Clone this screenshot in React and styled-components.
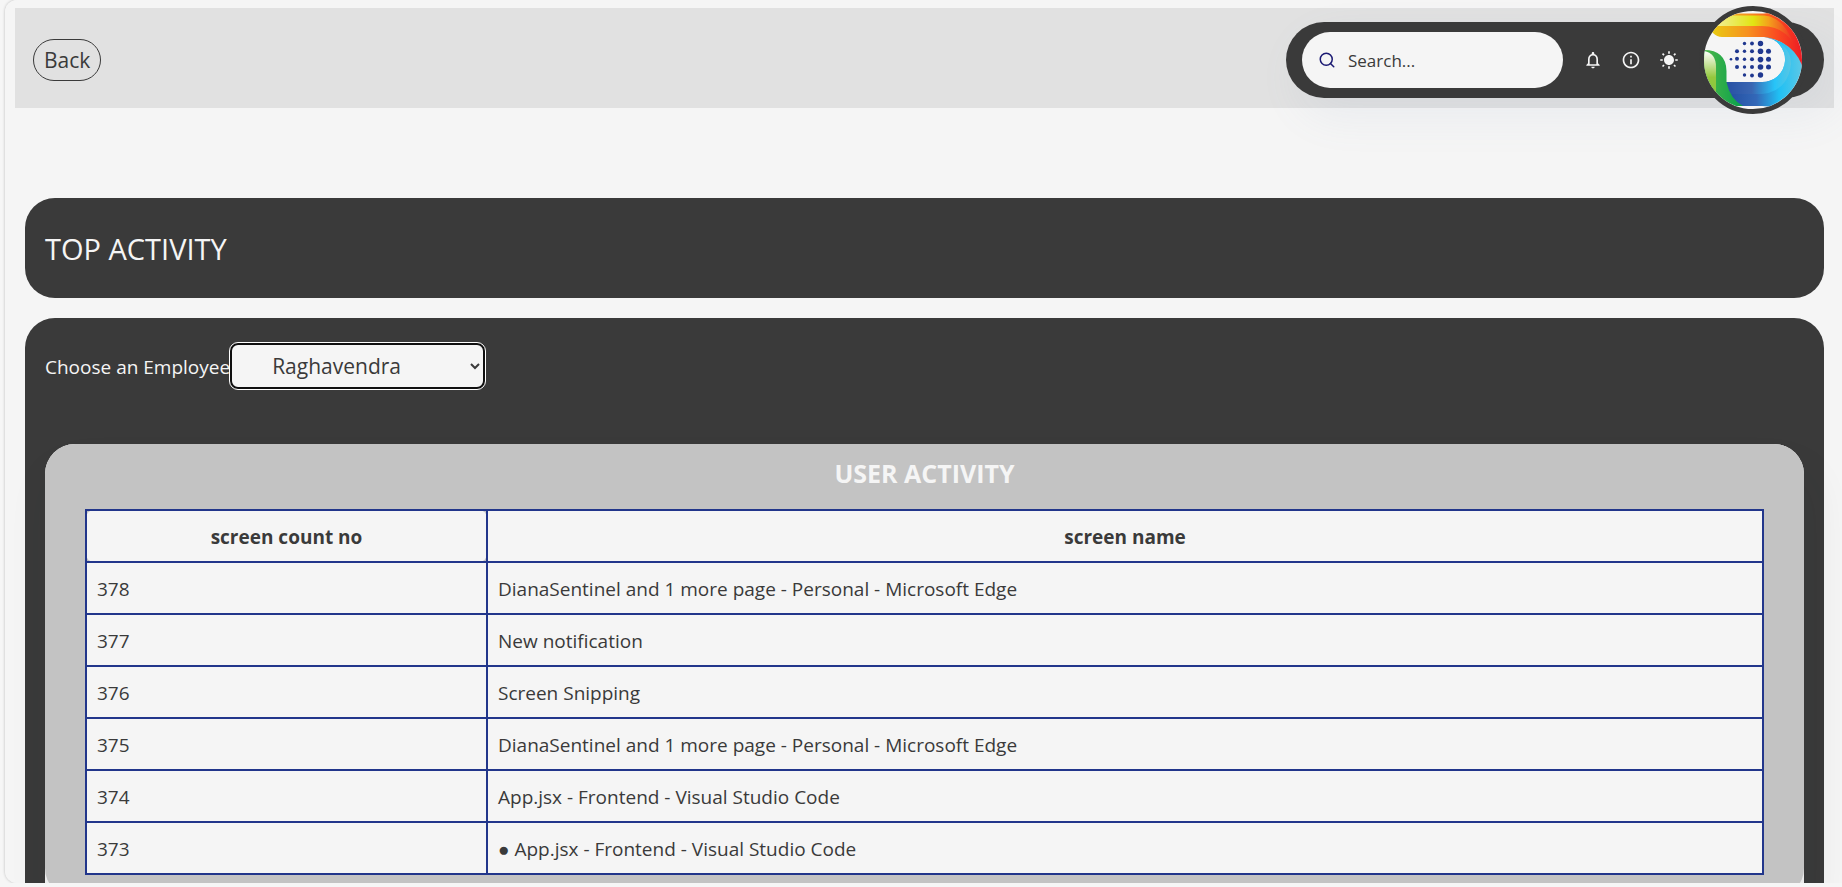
import React, { useState } from "react";
import styled, { createGlobalStyle } from "styled-components";
import { MdNotificationsNone, MdInfoOutline } from "react-icons/md";
import { IoMdSunny } from "react-icons/io";
import { FiSearch } from "react-icons/fi";

const color = {
  light: "#f5f5f5",
  dark: "#3a3a3a",
  bar: "#e1e1e1",
  card: "#c3c3c3",
  line: "#22368b",
};

const GlobalStyle = createGlobalStyle`
  *, *::before, *::after { box-sizing: border-box; }
  body {
    margin: 0;
    background: #f6f6f6;
    color: ${color.dark};
    font-family: "Segoe UI", "Open Sans", "Noto Sans", sans-serif;
    overflow: hidden;
  }
  button, input, select { font-family: inherit; }
`;

const Frame = styled.div`
  height: calc(100vh - 4px);
  margin-left: 5px;
  padding: 8px 8px 0 10px;
  background: ${color.light};
  border-radius: 12px 0 0 12px;
  box-shadow: 0 0 3px rgba(0, 0, 0, 0.25);
  overflow: auto;
  scrollbar-width: none;
`;

const TopBar = styled.header`
  display: flex;
  align-items: center;
  justify-content: space-between;
  height: 100px;
  padding: 4px 10px 0 18px;
  background: ${color.bar};
`;

const BackButton = styled.button`
  height: 42px;
  padding: 0 10px;
  border: 1px solid ${color.dark};
  border-radius: 21px;
  background: transparent;
  color: ${color.dark};
  font-size: 21px;
  line-height: 32px;
  cursor: pointer;
`;

const Tools = styled.div`
  display: flex;
  align-items: center;
  height: 76px;
  padding: 0 17px 0 16px;
  border-radius: 38px;
  background: ${color.dark};
  box-shadow: 14px 17px 40px 4px rgba(112, 144, 176, 0.08);
`;

const SearchBox = styled.label`
  display: flex;
  align-items: center;
  gap: 12px;
  width: 261px;
  height: 56px;
  padding: 0 16px;
  margin-right: 20px;
  border-radius: 28px;
  background: ${color.light};
  color: #1b1a73;
`;

const SearchInput = styled.input`
  flex: 1;
  min-width: 0;
  padding: 0;
  border: 0;
  outline: 0;
  background: transparent;
  color: ${color.dark};
  font-size: 17px;
  &::placeholder { color: ${color.dark}; opacity: 1; }
`;

const IconButton = styled.button`
  display: flex;
  padding: 0;
  margin-right: 18px;
  border: 0;
  background: transparent;
  color: ${color.light};
  cursor: pointer;
`;

const Avatar = styled.button`
  display: flex;
  width: 108px;
  height: 108px;
  padding: 0;
  margin-left: 2px;
  border: 5px solid ${color.dark};
  border-radius: 50%;
  background: ${color.light};
  overflow: hidden;
  cursor: pointer;
`;

const Content = styled.main`
  display: flex;
  flex-direction: column;
  gap: 20px;
  padding: 90px 10px 0;
`;

const TitleCard = styled.section`
  display: flex;
  align-items: center;
  height: 100px;
  padding: 2px 20px 0;
  border-radius: 30px;
  background: ${color.dark};
`;

const Title = styled.h1`
  margin: 0;
  color: ${color.light};
  font-size: 29px;
  font-weight: 400;
  line-height: 40px;
`;

const Panel = styled.section`
  padding: 25px 20px 20px;
  border-radius: 30px 30px 0 0;
  background: ${color.dark};
`;

const Picker = styled.div`
  display: flex;
  align-items: center;
  margin-bottom: 55px;
`;

const PickerLabel = styled.label`
  padding-top: 2px;
  color: ${color.light};
  font-size: 19px;
  line-height: 28px;
`;

const Select = styled.select`
  width: 255px;
  height: 46px;
  padding: 0 4px 0 36px;
  border: 2px solid #101010;
  border-radius: 8px;
  outline: 1px solid #fff;
  background: ${color.light};
  color: ${color.dark};
  font-size: 21px;
`;

const CardBack = styled.div`
  border-radius: 30px 30px 0 0;
  background: ${color.light};
`;

const Card = styled.div`
  padding: 11px 40px 23px;
  border-radius: 30px;
  background: ${color.card};
  box-shadow: 6px 30px 40px 4px rgba(40, 45, 55, 0.08);
`;

const CardTitle = styled.h2`
  margin: 0 0 18px;
  color: ${color.light};
  font-size: 25px;
  font-weight: 700;
  line-height: 36px;
  text-align: center;
`;

const Table = styled.table`
  width: 100%;
  border-collapse: collapse;
  table-layout: fixed;
  font-size: 19px;
  line-height: 28px;
`;

const HeadCell = styled.th`
  width: ${(p) => p.$width || "auto"};
  height: 52px;
  padding: 2px 10px 0;
  border: 2px solid ${color.line};
  border-radius: ${(p) => (p.$rounded ? "8px" : "0")};
  background: ${color.light};
`;

const Cell = styled.td`
  height: 52px;
  padding: 2px 10px 0;
  border: 2px solid ${color.line};
  background: ${color.light};
`;

const dots = [
  [40.5, 32.5, 1.7], [48, 32.5, 1.9], [56.5, 32.5, 2.7],
  [33, 40.3, 2], [40.5, 40.3, 1.7], [48, 40.3, 2], [56.5, 40.3, 2.8], [64.5, 40.3, 2.5],
  [27, 48.2, 1.3], [33, 47.7, 2], [40.5, 48.2, 1.7], [48, 48.2, 2], [56.5, 48.6, 2.8], [64.5, 48.2, 2.5],
  [33, 56, 2], [40.5, 56, 1.7], [48, 56, 2], [56.5, 56, 2.8], [64.5, 56, 2.5],
  [40.5, 64, 1.7], [48, 64.5, 1.9], [56.5, 64, 2.7],
];

function Logo() {
  return (
    <svg width="98" height="98" viewBox="0 0 98 98" aria-hidden="true">
      <defs>
        <linearGradient id="warm" x1="0" x2="1">
          <stop offset="0" stopColor="#e6d80e" />
          <stop offset=".45" stopColor="#f79020" />
          <stop offset=".75" stopColor="#fa4a20" />
          <stop offset="1" stopColor="#ec1c24" />
        </linearGradient>
        <linearGradient id="sun" x1="0" x2="1">
          <stop offset="0" stopColor="#f6f3c0" />
          <stop offset=".55" stopColor="#e2e412" />
          <stop offset=".72" stopColor="#f4a01c" />
          <stop offset="1" stopColor="#ee2a24" />
        </linearGradient>
        <linearGradient id="cool" x1="0" x2="1">
          <stop offset="0" stopColor="#224c9f" />
          <stop offset=".4" stopColor="#3368b8" />
          <stop offset=".7" stopColor="#20c0f4" />
          <stop offset="1" stopColor="#5cc8e6" />
        </linearGradient>
        <linearGradient id="sky" x1="0" x2="1">
          <stop offset="0" stopColor="#2750a4" />
          <stop offset=".4" stopColor="#3a66b2" />
          <stop offset=".75" stopColor="#27c4f8" />
          <stop offset="1" stopColor="#58c6e4" />
        </linearGradient>
        <linearGradient id="leaf" x1="0" x2="1">
          <stop offset="0" stopColor="#4db748" />
          <stop offset="1" stopColor="#06a04c" />
        </linearGradient>
        <linearGradient id="sprout" y1="0" y2="1" x2="0">
          <stop offset="0" stopColor="#ffffff" />
          <stop offset=".6" stopColor="#94c83d" />
          <stop offset="1" stopColor="#8cc63f" />
        </linearGradient>
      </defs>
      <path d="M0 15 L9 22 Q13 26 18 26 H60 Q88 30 98 56 V0 H70 Q65 2.500 60 2.500 H0Z" fill="url(#warm)" />
      <path d="M0 4.500 H60 Q80 6 90 34 Q80 15 58 15 H0Z" fill="url(#sun)" />
      <path d="M60 26 Q88 30 98 54 V98 H78 Q68 95 58 95 H38 Q22 86 22 71 H57 A22.500 22.500 0 0 0 60 26Z" fill="url(#cool)" />
      <path d="M60 26 Q87 32 87 53 Q84 80 58 83 H26 Q22 78 22 71 H57 A22.500 22.500 0 0 0 60 26Z" fill="url(#sky)" />
      <path d="M0 39 Q22 39 22.500 60 V71 Q26 88 39 95 H0Z" fill="url(#leaf)" />
      <path d="M0 40 Q12 42 12 56 V84 L0 74Z" fill="url(#sprout)" />
      {dots.map(([x, y, r]) => (
        <circle key={`${x}-${y}`} cx={x} cy={y} r={r} fill="#20388f" />
      ))}
    </svg>
  );
}

const rows = [
  [378, "DianaSentinel and 1 more page - Personal - Microsoft Edge"],
  [377, "New notification"],
  [376, "Screen Snipping"],
  [375, "DianaSentinel and 1 more page - Personal - Microsoft Edge"],
  [374, "App.jsx - Frontend - Visual Studio Code"],
  [373, "● App.jsx - Frontend - Visual Studio Code"],
];

export default function App() {
  const [employee, setEmployee] = useState("Raghavendra");
  return (
    <>
      <GlobalStyle />
      <Frame>
        <TopBar>
          <BackButton type="button">Back</BackButton>
          <Tools>
            <SearchBox>
              <FiSearch size={18} aria-hidden="true" />
              <SearchInput type="text" placeholder="Search..." aria-label="Search" />
            </SearchBox>
            <IconButton type="button" aria-label="Notifications">
              <MdNotificationsNone size={20} />
            </IconButton>
            <IconButton type="button" aria-label="Information">
              <MdInfoOutline size={20} />
            </IconButton>
            <IconButton type="button" aria-label="Toggle theme">
              <IoMdSunny size={20} />
            </IconButton>
            <Avatar type="button" aria-label="Profile">
              <Logo />
            </Avatar>
          </Tools>
        </TopBar>
        <Content>
          <TitleCard>
            <Title>TOP ACTIVITY</Title>
          </TitleCard>
          <Panel>
            <Picker>
              <PickerLabel htmlFor="employee">Choose an Employee</PickerLabel>
              <Select id="employee" value={employee} onChange={(e) => setEmployee(e.target.value)}>
                <option>Raghavendra</option>
              </Select>
            </Picker>
            <CardBack>
              <Card>
                <CardTitle>USER ACTIVITY</CardTitle>
                <Table>
                  <thead>
                    <tr>
                      <HeadCell scope="col" $width="401px" $rounded>screen count no</HeadCell>
                      <HeadCell scope="col">screen name</HeadCell>
                    </tr>
                  </thead>
                  <tbody>
                    {rows.map(([count, name]) => (
                      <tr key={count}>
                        <Cell>{count}</Cell>
                        <Cell>{name}</Cell>
                      </tr>
                    ))}
                  </tbody>
                </Table>
              </Card>
            </CardBack>
          </Panel>
        </Content>
      </Frame>
    </>
  );
}
